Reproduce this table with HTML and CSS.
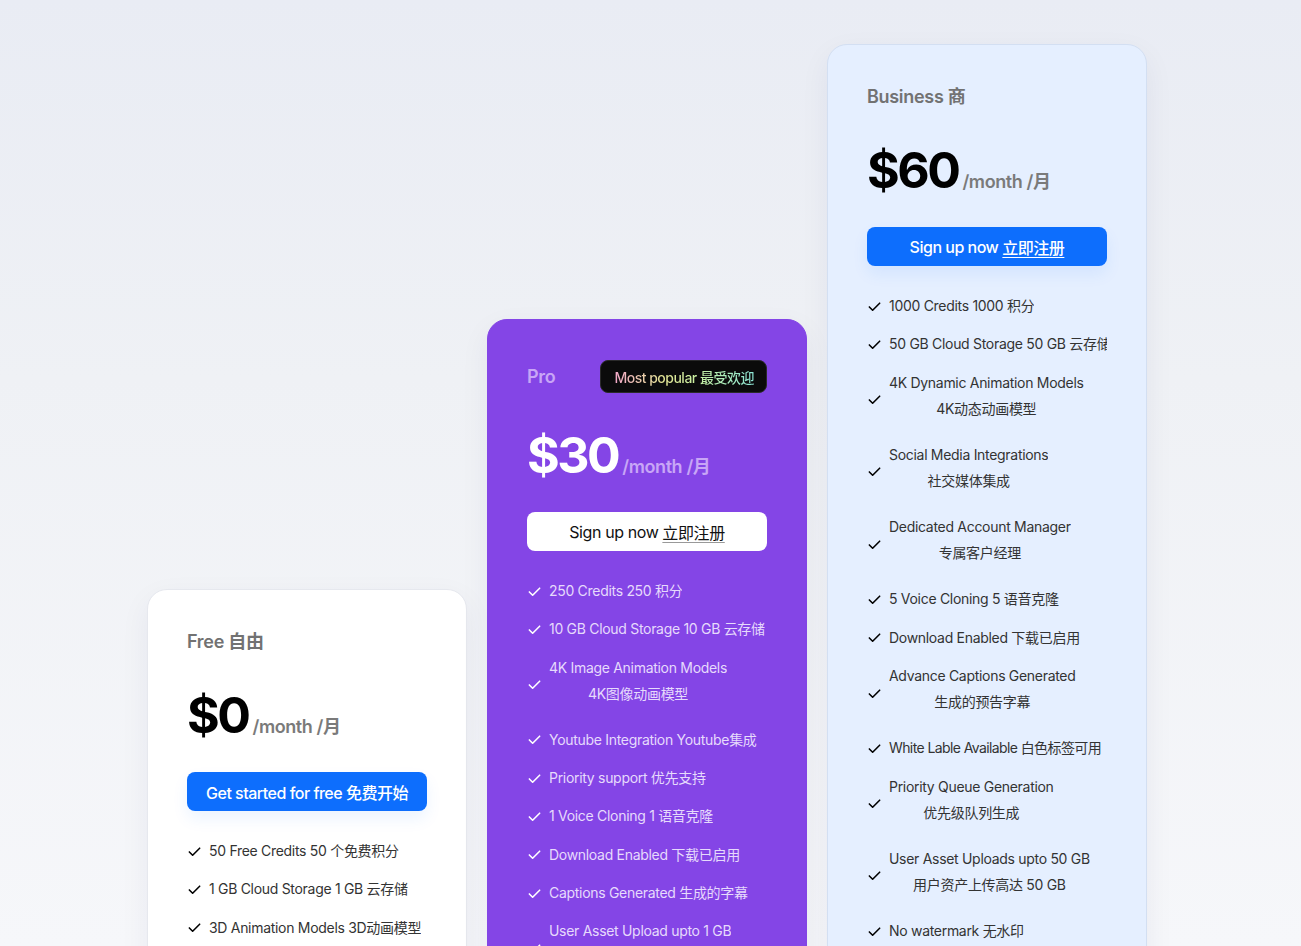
FILE: index.html
```html
<!DOCTYPE html>
<html lang="en">
<head>
<meta charset="utf-8">
<title>Pricing</title>
<link rel="stylesheet" href="styles.css">
</head>
<body>
<main class="pricing">
  <section class="card card-free">
    <h3 class="plan">Free 自由</h3>
    <p class="price"><span class="amount">$0</span><span class="per">/month /月</span></p>
    <a class="btn btn-blue" href="#">Get started for free 免费开始</a>
    <ul class="features">
      <li><svg class="check" viewBox="0 0 16 16"><path d="M2.5 8.5l3.5 3.5 7.5-7.5"/></svg><span class="ft">50 Free Credits 50 个免费积分</span></li>
      <li><svg class="check" viewBox="0 0 16 16"><path d="M2.5 8.5l3.5 3.5 7.5-7.5"/></svg><span class="ft">1 GB Cloud Storage 1 GB 云存储</span></li>
      <li><svg class="check" viewBox="0 0 16 16"><path d="M2.5 8.5l3.5 3.5 7.5-7.5"/></svg><span class="ft">3D Animation Models 3D动画模型</span></li>
      <li><svg class="check" viewBox="0 0 16 16"><path d="M2.5 8.5l3.5 3.5 7.5-7.5"/></svg><span class="ft">Standard support 标准支持</span></li>
    </ul>
  </section>

  <section class="card card-pro">
    <div class="plan-row">
      <h3 class="plan">Pro</h3>
      <span class="badge"><span class="badge-text">Most popular 最受欢迎</span></span>
    </div>
    <p class="price"><span class="amount">$30</span><span class="per">/month /月</span></p>
    <a class="btn btn-white" href="#">Sign up now <u>立即注册</u></a>
    <ul class="features">
      <li><svg class="check" viewBox="0 0 16 16"><path d="M2.5 8.5l3.5 3.5 7.5-7.5"/></svg><span class="ft">250 Credits 250 积分</span></li>
      <li><svg class="check" viewBox="0 0 16 16"><path d="M2.5 8.5l3.5 3.5 7.5-7.5"/></svg><span class="ft">10 GB Cloud Storage 10 GB 云存储</span></li>
      <li class="two"><svg class="check" viewBox="0 0 16 16"><path d="M2.5 8.5l3.5 3.5 7.5-7.5"/></svg><span class="ft"><span class="l1">4K Image Animation Models</span><span class="l2">4K图像动画模型</span></span></li>
      <li><svg class="check" viewBox="0 0 16 16"><path d="M2.5 8.5l3.5 3.5 7.5-7.5"/></svg><span class="ft">Youtube Integration Youtube集成</span></li>
      <li><svg class="check" viewBox="0 0 16 16"><path d="M2.5 8.5l3.5 3.5 7.5-7.5"/></svg><span class="ft">Priority support 优先支持</span></li>
      <li><svg class="check" viewBox="0 0 16 16"><path d="M2.5 8.5l3.5 3.5 7.5-7.5"/></svg><span class="ft">1 Voice Cloning 1 语音克隆</span></li>
      <li><svg class="check" viewBox="0 0 16 16"><path d="M2.5 8.5l3.5 3.5 7.5-7.5"/></svg><span class="ft">Download Enabled 下载已启用</span></li>
      <li><svg class="check" viewBox="0 0 16 16"><path d="M2.5 8.5l3.5 3.5 7.5-7.5"/></svg><span class="ft">Captions Generated 生成的字幕</span></li>
      <li class="two"><svg class="check" viewBox="0 0 16 16"><path d="M2.5 8.5l3.5 3.5 7.5-7.5"/></svg><span class="ft"><span class="l1">User Asset Upload upto 1 GB</span><span class="l2">用户资产上传高达 1 GB</span></span></li>
    </ul>
  </section>

  <section class="card card-biz">
    <h3 class="plan">Business 商</h3>
    <p class="price"><span class="amount">$60</span><span class="per">/month /月</span></p>
    <a class="btn btn-blue" href="#">Sign up now <u>立即注册</u></a>
    <ul class="features">
      <li><svg class="check" viewBox="0 0 16 16"><path d="M2.5 8.5l3.5 3.5 7.5-7.5"/></svg><span class="ft">1000 Credits 1000 积分</span></li>
      <li><svg class="check" viewBox="0 0 16 16"><path d="M2.5 8.5l3.5 3.5 7.5-7.5"/></svg><span class="ft">50 GB Cloud Storage 50 GB 云存储</span></li>
      <li class="two"><svg class="check" viewBox="0 0 16 16"><path d="M2.5 8.5l3.5 3.5 7.5-7.5"/></svg><span class="ft"><span class="l1">4K Dynamic Animation Models</span><span class="l2">4K动态动画模型</span></span></li>
      <li class="two"><svg class="check" viewBox="0 0 16 16"><path d="M2.5 8.5l3.5 3.5 7.5-7.5"/></svg><span class="ft"><span class="l1">Social Media Integrations</span><span class="l2">社交媒体集成</span></span></li>
      <li class="two"><svg class="check" viewBox="0 0 16 16"><path d="M2.5 8.5l3.5 3.5 7.5-7.5"/></svg><span class="ft"><span class="l1">Dedicated Account Manager</span><span class="l2">专属客户经理</span></span></li>
      <li><svg class="check" viewBox="0 0 16 16"><path d="M2.5 8.5l3.5 3.5 7.5-7.5"/></svg><span class="ft">5 Voice Cloning 5 语音克隆</span></li>
      <li><svg class="check" viewBox="0 0 16 16"><path d="M2.5 8.5l3.5 3.5 7.5-7.5"/></svg><span class="ft">Download Enabled 下载已启用</span></li>
      <li class="two"><svg class="check" viewBox="0 0 16 16"><path d="M2.5 8.5l3.5 3.5 7.5-7.5"/></svg><span class="ft"><span class="l1">Advance Captions Generated</span><span class="l2">生成的预告字幕</span></span></li>
      <li><svg class="check" viewBox="0 0 16 16"><path d="M2.5 8.5l3.5 3.5 7.5-7.5"/></svg><span class="ft ft-tight">White Lable Available 白色标签可用</span></li>
      <li class="two"><svg class="check" viewBox="0 0 16 16"><path d="M2.5 8.5l3.5 3.5 7.5-7.5"/></svg><span class="ft"><span class="l1">Priority Queue Generation</span><span class="l2">优先级队列生成</span></span></li>
      <li class="two"><svg class="check" viewBox="0 0 16 16"><path d="M2.5 8.5l3.5 3.5 7.5-7.5"/></svg><span class="ft"><span class="l1">User Asset Uploads upto 50 GB</span><span class="l2">用户资产上传高达 50 GB</span></span></li>
      <li><svg class="check" viewBox="0 0 16 16"><path d="M2.5 8.5l3.5 3.5 7.5-7.5"/></svg><span class="ft">No watermark 无水印</span></li>
    </ul>
  </section>
</main>
</body>
</html>
```

FILE: styles.css
```css
* { box-sizing: border-box; }

html, body {
  margin: 0;
  padding: 0;
  height: 946px;
  overflow: hidden;
}

body {
  font-family: Inter, "Noto Sans CJK SC", sans-serif;
  background: linear-gradient(180deg, #e9ecf4 0%, #eff1f5 40%, #f6f7fa 100%);
  color: #111;
}

.pricing {
  display: flex;
  align-items: flex-start;
  gap: 20px;
  padding: 44px 0 0 147px;
}

.card {
  flex: 0 0 320px;
  width: 320px;
  border-radius: 20px;
  border: 1px solid transparent;
  padding: 39px 39px 40px;
  box-shadow: 0 10px 30px rgba(30, 40, 80, 0.06);
}

.card-free {
  margin-top: 545px;
  background: #ffffff;
  border-color: #e6e8ee;
}

.card-pro {
  margin-top: 275px;
  background: #8445e6;
  border-color: #8445e6;
}

.card-biz {
  background: #e5efff;
  border-color: #d3dff2;
}

.plan {
  margin: 0;
  height: 26px;
  line-height: 26px;
  font-size: 18px;
  font-weight: 600;
  color: #727272;
  letter-spacing: -0.3px;
}

.card-pro .plan { color: #c8a6f6; }

.plan-row {
  display: flex;
  align-items: center;
  justify-content: space-between;
  height: 37px;
  margin-top: -1px;
}

.badge {
  display: inline-flex;
  align-items: center;
  height: 33px;
  padding: 0 12px 0 13px;
  background: #0b0b0b;
  border: 1px solid #2a2a2a;
  border-radius: 8px;
}

.badge-text {
  font-size: 14px;
  font-weight: 500;
  letter-spacing: -0.5px;
  background: linear-gradient(90deg, #f2a7c9 0%, #e4e596 35%, #c7f0a2 60%, #8de6d6 100%);
  -webkit-background-clip: text;
  background-clip: text;
  color: transparent;
}

.price {
  margin: 30px 0 0;
  display: flex;
  align-items: baseline;
  height: 60px;
}

.amount {
  font-size: 50px;
  font-weight: 700;
  letter-spacing: -2.5px;
  line-height: 60px;
  color: #000;
}

.card-pro .amount { color: #fff; }

.per {
  margin-left: 4px;
  font-size: 18px;
  font-weight: 600;
  color: #7a7a7a;
  letter-spacing: -0.4px;
}

.card-pro .per { color: #c8a6f6; }

.btn {
  display: flex;
  align-items: center;
  justify-content: center;
  margin-top: 27px;
  height: 39px;
  width: 240px;
  border-radius: 8px;
  font-size: 16px;
  font-weight: 500;
  letter-spacing: -0.5px;
  text-decoration: none;
}

.btn u { margin-left: 4px; text-underline-offset: 3px; }

.btn-blue {
  background: #0d6efd;
  color: #fff;
  box-shadow: 0 8px 16px rgba(13, 110, 253, 0.08);
}

.btn-white {
  background: #fff;
  color: #111;
  font-weight: 400;
  letter-spacing: -0.4px;
}

.btn-white u { text-decoration-thickness: 1px; text-decoration-color: #999; }

.features {
  list-style: none;
  margin: 28px 0 0;
  padding: 0;
  display: flex;
  flex-direction: column;
  gap: 14.3px;
}

.features li {
  display: flex;
  align-items: center;
  gap: 7px;
  font-size: 14px;
  color: #333;
  letter-spacing: -0.3px;
}

.card-pro .features li { color: #e6dafc; }

.check {
  flex: 0 0 15px;
  width: 15px;
  height: 15px;
  fill: none;
  stroke: #000;
  stroke-width: 1.7;
  stroke-linecap: round;
  stroke-linejoin: round;
}

.card-pro .check { stroke: #fff; }

.ft {
  min-width: 0;
  white-space: nowrap;
  overflow: hidden;
  line-height: 24px;
  text-align: center;
}

.ft-tight { letter-spacing: -0.6px; overflow: visible; }

.two .ft {
  display: flex;
  flex-direction: column;
  padding-bottom: 8px;
}

.two .l2 { margin-top: 2px; }
```
